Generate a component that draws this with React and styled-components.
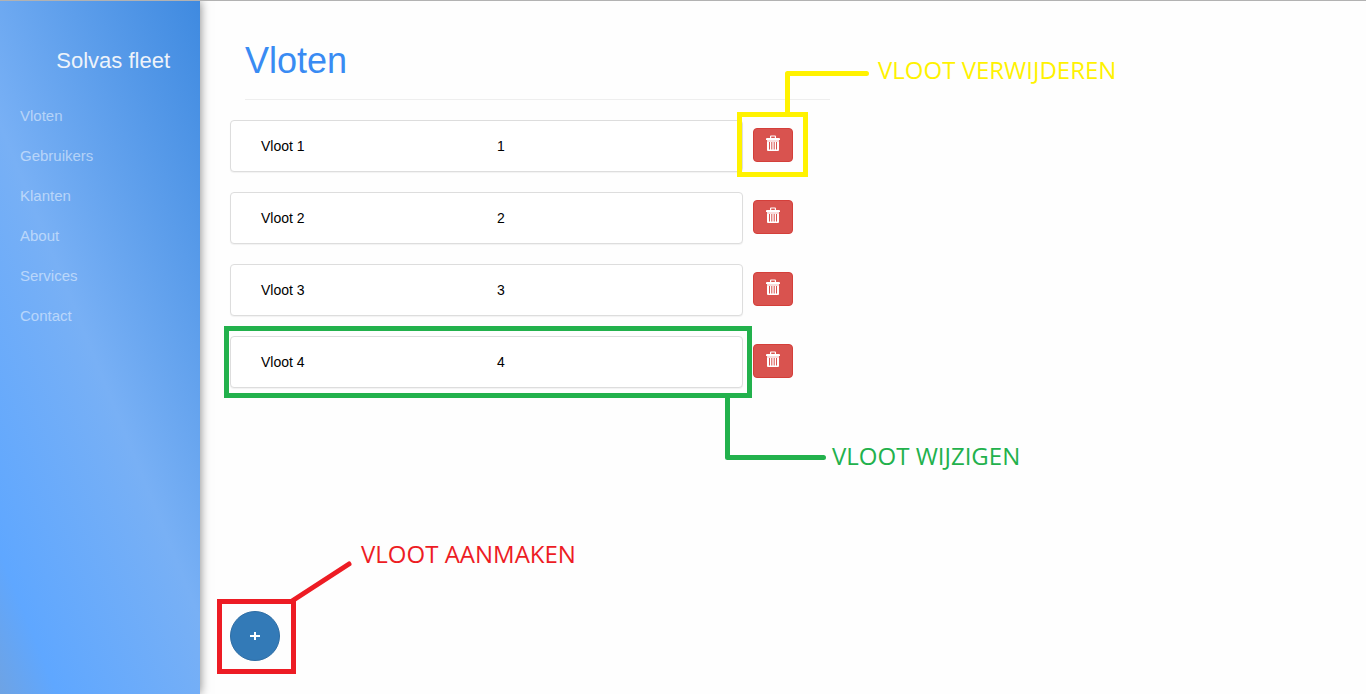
import React from "react";
import styled, { createGlobalStyle } from "styled-components";

const GlobalStyle = createGlobalStyle`
  *, *::before, *::after { box-sizing: border-box; }
  body {
    margin: 0;
    background: #fefefe;
    color: #000;
    font-family: "Liberation Sans", Arial, Helvetica, sans-serif;
    font-size: 14px;
    line-height: 20px;
  }
`;

const Page = styled.div`
  display: flex;
  min-height: 100vh;
  border-top: 1px solid #b2b2b2;
  overflow: hidden;
`;

const Sidebar = styled.nav`
  flex: 0 0 200px;
  padding-top: 40px;
  background: linear-gradient(68deg, #6ea3e4 0%, #5fa7ff 12%, #78b0f5 48%, #3f8ae0 100%);
  box-shadow: 0 0 10px rgba(0, 0, 0, 0.5);
`;

const Brand = styled.a`
  display: block;
  padding-right: 30px;
  color: #eef3fa;
  font-size: 22px;
  line-height: 40px;
  text-align: right;
  text-decoration: none;
`;

const Menu = styled.ul`
  margin: 15px 0 0;
  padding: 0;
  list-style: none;
`;

const MenuLink = styled.a`
  display: block;
  padding-left: 20px;
  color: rgba(255, 255, 255, 0.5);
  font-size: 15px;
  line-height: 40px;
  text-decoration: none;
`;

const Main = styled.main`
  flex: 1;
  min-width: 0;
  display: flex;
  flex-direction: column;
  padding: 40px 30px 33px;
`;

const Content = styled.div`
  width: 100%;
  max-width: 615px;
`;

const Header = styled.header`
  margin: 0 15px 20px;
  padding-bottom: 18px;
  border-bottom: 1px solid #eee;
`;

const Title = styled.h1`
  margin: 0;
  color: #398bf3;
  font-size: 36px;
  font-weight: 400;
  line-height: 40px;
`;

const FleetList = styled.ul`
  display: flex;
  flex-direction: column;
  gap: 20px;
  margin: 0;
  padding: 0;
  list-style: none;
`;

const FleetItem = styled.li`
  display: flex;
  align-items: center;
  gap: 10px;
`;

const Target = styled.div`
  position: relative;
  display: flex;
  flex: ${(p) => (p.$grow ? "0 1 513px" : "none")};
  align-self: flex-start;
`;

const ButtonSlot = styled(Target)`
  align-self: center;
  margin-bottom: 2px;
`;

const FleetCard = styled.a`
  flex: 1;
  display: grid;
  grid-template-columns: 236px 1fr;
  padding: 15px 30px;
  border: 1px solid #ddd;
  border-radius: 4px;
  background: #fff;
  box-shadow: 0 1px 1px rgba(0, 0, 0, 0.05);
  color: #000;
  text-decoration: none;
`;

const DeleteButton = styled.button`
  display: flex;
  justify-content: center;
  width: 40px;
  height: 34px;
  padding: 6px 0 0;
  border: 1px solid #d43f3a;
  border-radius: 4px;
  background: #d9534f;
  color: #fff;
  cursor: pointer;
`;

const AddSlot = styled(Target)`
  margin-top: auto;
`;

const AddButton = styled.button`
  display: flex;
  align-items: center;
  justify-content: center;
  width: 50px;
  height: 50px;
  padding: 0;
  border: 1px solid #2e6da4;
  border-radius: 50%;
  background: #337ab7;
  color: #fff;
  cursor: pointer;
`;

const Frame = styled.div`
  position: absolute;
  inset: ${(p) => p.$inset};
  z-index: 2;
  border: 5px solid ${(p) => p.$color};
  pointer-events: none;
`;

const Leader = styled.svg`
  position: absolute;
  left: ${(p) => p.$x}px;
  top: ${(p) => p.$y}px;
  z-index: 2;
  fill: none;
  stroke: ${(p) => p.$color};
  stroke-width: 5;
  stroke-linecap: round;
  stroke-linejoin: round;
  pointer-events: none;
`;

const Label = styled.span`
  position: absolute;
  left: ${(p) => p.$x}px;
  top: ${(p) => p.$y}px;
  z-index: 2;
  color: ${(p) => p.$color};
  font-family: "Open Sans", "Noto Sans", sans-serif;
  font-size: 24px;
  line-height: 30px;
  white-space: nowrap;
`;

const TrashIcon = () => (
  <svg width="14" height="16" viewBox="0 0 14 16" fill="currentColor" aria-hidden="true">
    <path
      fillRule="evenodd"
      d="M4 3V1.500Q4 .5 5 .5h4q1 0 1 1V3h3q1 0 1 1v1H0V4q0-1 1-1zM5.200 3h3.600V1.600H5.200z"
    />
    <path opacity="0.8" d="M1 5h12v2H1z" />
    <path
      fillRule="evenodd"
      d="M1 7h12v8q0 1-1 1H2q-1 0-1-1zM3 7v7.500h1V7zM5.300 7v7.500h1V7zM7.700 7v7.500h1V7zM10 7v7.500h1V7z"
    />
  </svg>
);

const PlusIcon = () => (
  <svg width="10" height="10" viewBox="0 0 10 10" fill="currentColor" aria-hidden="true">
    <path d="M4 1h2v3h4v2H6v3H4V6H0V4h4z" />
  </svg>
);

const DeleteNote = () => (
  <>
    <Frame $color="#fff200" $inset="-16px -15px -15px -16px" />
    <Leader $color="#fff200" $x={30} $y={-60} width="90" height="46">
      <path d="M4.500 44V5.500H83.500" />
    </Leader>
    <Label $color="#fff200" $x={125} $y={-73}>VLOOT VERWIJDEREN</Label>
  </>
);

const EditNote = () => (
  <>
    <Frame $color="#22b14c" $inset="-10px -9px -10px -6px" />
    <Leader $color="#22b14c" $x={490} $y={58} width="110" height="70">
      <path d="M7.500 3V63.500H103.500" />
    </Leader>
    <Label $color="#22b14c" $x={602} $y={105}>VLOOT WIJZIGEN</Label>
  </>
);

const AddNote = () => (
  <>
    <Frame $color="#ed1c24" $inset="-12px -16px -13px -13px" />
    <Leader $color="#ed1c24" $x={55} $y={-52} width="72" height="48">
      <path d="M7 42L64 5" />
    </Leader>
    <Label $color="#ed1c24" $x={131} $y={-72}>VLOOT AANMAKEN</Label>
  </>
);

const menu = ["Vloten", "Gebruikers", "Klanten", "About", "Services", "Contact"];
const fleets = [
  { id: 1, name: "Vloot 1" },
  { id: 2, name: "Vloot 2" },
  { id: 3, name: "Vloot 3" },
  { id: 4, name: "Vloot 4" },
];

export default function App() {
  return (
    <>
      <GlobalStyle />
      <Page>
        <Sidebar>
          <Brand href="#">Solvas fleet</Brand>
          <Menu>
            {menu.map((item) => (
              <li key={item}>
                <MenuLink href="#">{item}</MenuLink>
              </li>
            ))}
          </Menu>
        </Sidebar>
        <Main>
          <Content>
            <Header>
              <Title>Vloten</Title>
            </Header>
            <FleetList>
              {fleets.map(({ id, name }) => (
                <FleetItem key={id}>
                  <Target $grow>
                    <FleetCard href="#">
                      <span>{name}</span>
                      <span>{id}</span>
                    </FleetCard>
                    {id === 4 && <EditNote />}
                  </Target>
                  <ButtonSlot>
                    <DeleteButton type="button" aria-label={`${name} verwijderen`}>
                      <TrashIcon />
                    </DeleteButton>
                    {id === 1 && <DeleteNote />}
                  </ButtonSlot>
                </FleetItem>
              ))}
            </FleetList>
          </Content>
          <AddSlot>
            <AddButton type="button" aria-label="Vloot aanmaken">
              <PlusIcon />
            </AddButton>
            <AddNote />
          </AddSlot>
        </Main>
      </Page>
    </>
  );
}
